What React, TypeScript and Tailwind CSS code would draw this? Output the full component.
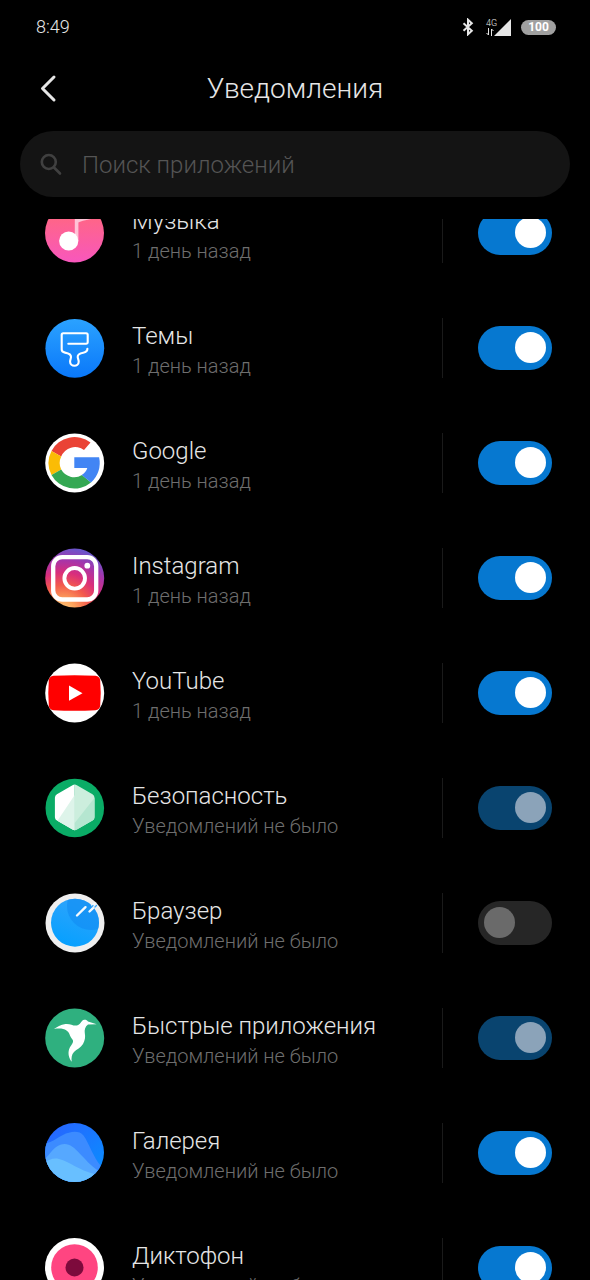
import { useLayoutEffect, useRef, useState } from 'react'
import type { ReactNode } from 'react'

type App = {
  id: string
  name: string
  last: string
  enabled: boolean
  locked?: boolean
  icon: ReactNode
}

/* ---------- App icons ---------- */

function Disc({ children }: { children: ReactNode }) {
  return (
    <svg viewBox="0 0 60 60" className="h-15 w-15 shrink-0" aria-hidden="true">
      {children}
    </svg>
  )
}

const musicIcon = (
  <Disc>
    <defs>
      <linearGradient id="music" x1="0" y1="0" x2="0" y2="1">
        <stop offset="0.2" stopColor="#ff6684" />
        <stop offset="1" stopColor="#f857bd" />
      </linearGradient>
    </defs>
    <circle cx="29.5" cy="30" r="29.5" fill="url(#music)" />
    <path d="M29.8 8h3.6v30h-3.6z" fill="#ffc3d6" />
    <path d="M33 12l13 4-8 1.800-5 1.800z" fill="#ffc3d6" />
    <circle cx="23.7" cy="38" r="9.6" fill="#fff" />
  </Disc>
)

const themesIcon = (
  <Disc>
    <defs>
      <linearGradient id="themes" x1="0" y1="0" x2="0" y2="1">
        <stop stopColor="#2ba2ff" />
        <stop offset="1" stopColor="#0a78fa" />
      </linearGradient>
    </defs>
    <circle cx="29.8" cy="30.3" r="29.4" fill="url(#themes)" />
    <path
      d="M23.3 25.8h17.9a1.5 1.5 0 0 0 1.5-1.5v-7.5a1.5 1.5 0 0 0-1.5-1.5H18.2a1.5 1.5 0 0 0-1.5 1.500v14.700c0 2 1.300 2.700 3.300 3.100 4 .800 6.200 1.600 6 4.400-.100 1.600-.900 3-.900 4.700 0 5.400 8.600 5.400 8.600 0 0-1.700-.900-3.100-1-4.700-.200-3.100 2-3.700 5.500-4.300 3-.500 4.300-1.500 4.200-3.900"
      fill="none"
      stroke="#fff"
      strokeWidth="2.1"
      strokeLinecap="round"
      strokeLinejoin="round"
    />
  </Disc>
)

const googleIcon = (
  <Disc>
    <circle cx="29.7" cy="30" r="29.5" fill="#fff" />
    <path d="M6.500 18A26 26 0 0 1 45.500 9.500L39 17A15 15 0 0 0 16.200 23.500z" fill="#ea4335" />
    <path d="M6.500 18a26 26 0 0 0 0 24l9.700-5.500a15 15 0 0 1 0-13z" fill="#fbbc05" />
    <path d="M6.500 42a26 26 0 0 0 39.500 7.500l-9-7.500A15 15 0 0 1 16.200 36.500z" fill="#34a853" />
    <path d="M29.300 24.300h24.800A26 26 0 0 1 46 49.500l-9.300-7.500q4.500-2.800 5.600-7H29.300z" fill="#4285f4" />
  </Disc>
)

const instagramIcon = (
  <Disc>
    <defs>
      <radialGradient id="insta" gradientUnits="userSpaceOnUse" cx="18" cy="64" r="64">
        <stop stopColor="#ffd080" />
        <stop offset="0.2" stopColor="#fca25c" />
        <stop offset="0.42" stopColor="#f35a4c" />
        <stop offset="0.62" stopColor="#d92e7c" />
        <stop offset="0.82" stopColor="#a436ac" />
        <stop offset="1" stopColor="#6c55cb" />
      </radialGradient>
    </defs>
    <circle cx="29.7" cy="30" r="29.5" fill="url(#insta)" />
    <rect x="8.2" y="9.2" width="43" height="42.3" rx="9" fill="none" stroke="#fff" strokeWidth="4.3" />
    <circle cx="29.7" cy="30.3" r="10.3" fill="none" stroke="#fff" strokeWidth="3.9" />
    <circle cx="42.3" cy="17.7" r="2.9" fill="#fff" />
  </Disc>
)

const youtubeIcon = (
  <Disc>
    <circle cx="29.7" cy="30" r="29.5" fill="#fff" />
    <path
      d="M8.500 12.800Q29.500 11.600 50.500 12.800q4.300.400 4.700 4.700 1 12.500 0 25-.400 4.300-4.700 4.700-21 1.200-42 0-4.300-.400-4.700-4.700-1-12.500 0-25 .400-4.300 4.700-4.700z"
      fill="#f00"
    />
    <path d="M24 22.500v15.300l13.500-7.600z" fill="#fff" />
  </Disc>
)

const securityIcon = (
  <Disc>
    <defs>
      <clipPath id="shield">
        <path d="M27.500 7.200q2.200-1.400 4.400 0l15.600 9q2 1.200 2 3.600v19.400q0 2.200-2 3.400l-15.600 9q-2.200 1.400-4.400 0l-15.600-9q-2-1.200-2-3.400V19.800q0-2.400 2-3.600z" />
      </clipPath>
    </defs>
    <circle cx="29.8" cy="30" r="29.3" fill="#0aac66" />
    <g clipPath="url(#shield)">
      <path d="M0 0h29.700v60H0z" fill="#fff" />
      <path d="M29.700 17v43H8L11 45z" fill="#def4ea" />
      <path d="M29.700 0H60v60H29.700z" fill="#cceedd" />
      <path d="M29.700 45L51 18v42H29.700z" fill="#b5e6d0" />
    </g>
  </Disc>
)

const browserIcon = (
  <Disc>
    <defs>
      <linearGradient id="browser" x1="0.7" y1="0" x2="0.3" y2="1">
        <stop stopColor="#32a4fb" />
        <stop offset="1" stopColor="#05a0ff" />
      </linearGradient>
      <clipPath id="globe">
        <circle cx="30" cy="29.7" r="24" />
      </clipPath>
    </defs>
    <circle cx="30" cy="30" r="29.5" fill="#efefef" />
    <circle cx="30" cy="29.7" r="24" fill="url(#browser)" />
    <circle cx="46" cy="13" r="24" fill="#138ef4" opacity="0.7" clipPath="url(#globe)" />
    <path
      d="M32 22.500l8.500-8.300M44.500 18.500l3.500-3.400M47.500 12.500l2-2"
      stroke="#f4faff"
      strokeWidth="2.4"
      strokeLinecap="round"
    />
    <path d="M47 13.500l1-1M50 14l1.500-1.500" stroke="#32a4fb" strokeWidth="1.2" strokeLinecap="round" />
  </Disc>
)

const quickAppsIcon = (
  <Disc>
    <circle cx="29.7" cy="30" r="29.5" fill="#2fb07f" />
    <path
      d="M51.700 16.300L43 13.500C41.500 11.300 38.500 11.400 36.800 13.300 35.500 15 34.500 17 32 17.500 28 18.200 25.500 15.500 20.500 16 15.500 16.500 12 19 9 21c5.500-1 9.500-.500 12.500 1.500 3 2 3 4.500 4.500 7 1.200 2 2.500 2.500 2 4.500-.700 2.500-3 4-4 7.500-1.200 4.500 0 9 2.700 12.200C26.300 50 26.500 46.500 29 44c3-3 6.500-4 9-8 2-3.500 2.500-7 1.800-11-.500-3 .200-6.500 3.200-8.500z"
      fill="#fff"
    />
  </Disc>
)

const galleryIcon = (
  <Disc>
    <defs>
      <linearGradient id="sky" x1="0.2" y1="0" x2="0.9" y2="0.8">
        <stop stopColor="#2766ff" />
        <stop offset="1" stopColor="#0a8cff" />
      </linearGradient>
      <clipPath id="frame">
        <circle cx="29.5" cy="29.5" r="29.5" />
      </clipPath>
    </defs>
    <g clipPath="url(#frame)">
      <path d="M0 0h60v60H0z" fill="url(#sky)" />
      <path d="M0 20.500c8-1.500 11-5 18-8.500 7-3.500 16-5 20.500.500C44 20 48 34 56 43v17H0z" fill="#3c8bff" />
      <path d="M0 36c5-4.500 10-15 19.500-15C31 21 37 37 54 48v12H0z" fill="#56a8ff" />
      <path d="M0 39c4-2 8-4.500 14-3C25 39 34 47 49 51v9H0z" fill="#68bfff" />
    </g>
  </Disc>
)

const recorderIcon = (
  <Disc>
    <circle cx="29.5" cy="29.5" r="29.5" fill="#fff" />
    <circle cx="29.5" cy="29.5" r="23.3" fill="#ff4581" />
    <circle cx="29.5" cy="29.5" r="9" fill="#7d0a3c" />
  </Disc>
)

const initialApps: App[] = [
  { id: 'music', name: 'Музыка', last: '1 день назад', enabled: true, icon: musicIcon },
  { id: 'themes', name: 'Темы', last: '1 день назад', enabled: true, icon: themesIcon },
  { id: 'google', name: 'Google', last: '1 день назад', enabled: true, icon: googleIcon },
  { id: 'instagram', name: 'Instagram', last: '1 день назад', enabled: true, icon: instagramIcon },
  { id: 'youtube', name: 'YouTube', last: '1 день назад', enabled: true, icon: youtubeIcon },
  { id: 'security', name: 'Безопасность', last: 'Уведомлений не было', enabled: true, locked: true, icon: securityIcon },
  { id: 'browser', name: 'Браузер', last: 'Уведомлений не было', enabled: false, icon: browserIcon },
  { id: 'quick', name: 'Быстрые приложения', last: 'Уведомлений не было', enabled: true, locked: true, icon: quickAppsIcon },
  { id: 'gallery', name: 'Галерея', last: 'Уведомлений не было', enabled: true, icon: galleryIcon },
  { id: 'recorder', name: 'Диктофон', last: 'Уведомлений не было', enabled: true, icon: recorderIcon },
]

/* ---------- Page parts ---------- */

function StatusBar() {
  return (
    <div className="flex h-[54px] shrink-0 items-center justify-between pr-[34px] pl-9 text-[#e6e6e6]">
      <span className="text-lg">8:49</span>
      <div className="flex items-center">
        <svg viewBox="0 0 12 18" className="mr-3 h-[18px] w-3" fill="none" stroke="currentColor" strokeWidth="2" aria-hidden="true">
          <path d="M1.500 5.200l8.300 7.600L6 16.300V1.700l3.800 3.500-8.300 7.600" />
        </svg>
        <div className="mr-2.5 flex items-end">
          <div className="flex flex-col items-start">
            <span className="-mr-1.5 text-[9px] leading-[9px]">4G</span>
            <svg viewBox="0 0 8 8" className="h-2 w-2" fill="none" stroke="currentColor" aria-hidden="true">
              <path d="M2.500 0v7M.500 5l2 2M5.500 8V1M7.500 3l-2-2" />
            </svg>
          </div>
          <svg viewBox="0 0 17 17" className="h-[17px] w-[17px]" fill="currentColor" aria-hidden="true">
            <path d="M17 0v17H0z" />
          </svg>
        </div>
        <span className="flex h-[15px] w-[35px] items-center justify-center rounded-full bg-[#a0a0a0] text-xs leading-none font-bold text-white">
          100
        </span>
      </div>
    </div>
  )
}

function AppRow({ app, onToggle }: { app: App; onToggle: (id: string) => void }) {
  return (
    <li className="flex h-[115px] items-center pr-[38px] pl-[45px]">
      {app.icon}
      <label htmlFor={app.id} className="ml-[27px] min-w-0 flex-1 pt-1">
        <span className="block truncate text-2xl leading-8 text-[#e6e6e6]">{app.name}</span>
        <span className="block truncate text-xl leading-7 text-[#6e6e6e]">{app.last}</span>
      </label>
      <div className="mr-[35px] h-15 w-px shrink-0 bg-[#1a1a1a]" />
      <input
        id={app.id}
        type="checkbox"
        role="switch"
        checked={app.enabled}
        disabled={app.locked}
        onChange={() => onToggle(app.id)}
        className="flex h-11 w-[74px] shrink-0 appearance-none items-center rounded-full bg-[#262626] px-1.5 before:h-[31px] before:w-[31px] before:rounded-full before:bg-[#6a6a6a] checked:justify-end checked:bg-[#0678d0] checked:before:bg-white disabled:checked:bg-[#09446f] disabled:checked:before:bg-[#8ba3b9]"
      />
    </li>
  )
}

export default function App() {
  const [apps, setApps] = useState(initialApps)
  const list = useRef<HTMLUListElement>(null)

  // the list opens slightly scrolled
  useLayoutEffect(() => {
    if (list.current) list.current.scrollTop = 44
  }, [])

  const toggle = (id: string) => setApps((prev) => prev.map((a) => (a.id === id ? { ...a, enabled: !a.enabled } : a)))

  return (
    <div className="flex h-dvh flex-col bg-black font-['Roboto','Noto_Sans',sans-serif] font-light">
      <StatusBar />

      <header className="grid h-[69px] shrink-0 grid-cols-[1fr_auto_1fr] items-center px-9">
        <button aria-label="Назад" className="flex h-10 w-10 items-center text-[#e6e6e6]">
          <svg viewBox="0 0 24 30" className="h-[30px] w-6" fill="none" stroke="currentColor" strokeWidth="3" strokeLinecap="round" strokeLinejoin="round">
            <path d="M18 3L6.500 14.500 18 26" />
          </svg>
        </button>
        <h1 className="text-[28px] leading-9 text-[#e6e6e6]">Уведомления</h1>
      </header>

      <div className="mx-5 mt-2 mb-[22px] flex h-[66px] shrink-0 items-center rounded-full bg-[#141414] pr-6 pl-5">
        <svg viewBox="0 0 24 24" className="h-6 w-6 shrink-0" fill="none" stroke="#404040" strokeWidth="2.6" strokeLinecap="round" aria-hidden="true">
          <circle cx="8.8" cy="10" r="7" />
          <path d="M14 15.500l6 6" />
        </svg>
        <input
          type="text"
          aria-label="Поиск приложений"
          placeholder="Поиск приложений"
          className="ml-[18px] min-w-0 flex-1 bg-transparent pt-0.5 text-2xl text-[#e6e6e6] outline-none placeholder:text-[#555]"
        />
      </div>

      <ul ref={list} className="min-h-0 flex-1 overflow-y-auto [scrollbar-width:none]">
        {apps.map((app) => (
          <AppRow key={app.id} app={app} onToggle={toggle} />
        ))}
      </ul>
    </div>
  )
}
